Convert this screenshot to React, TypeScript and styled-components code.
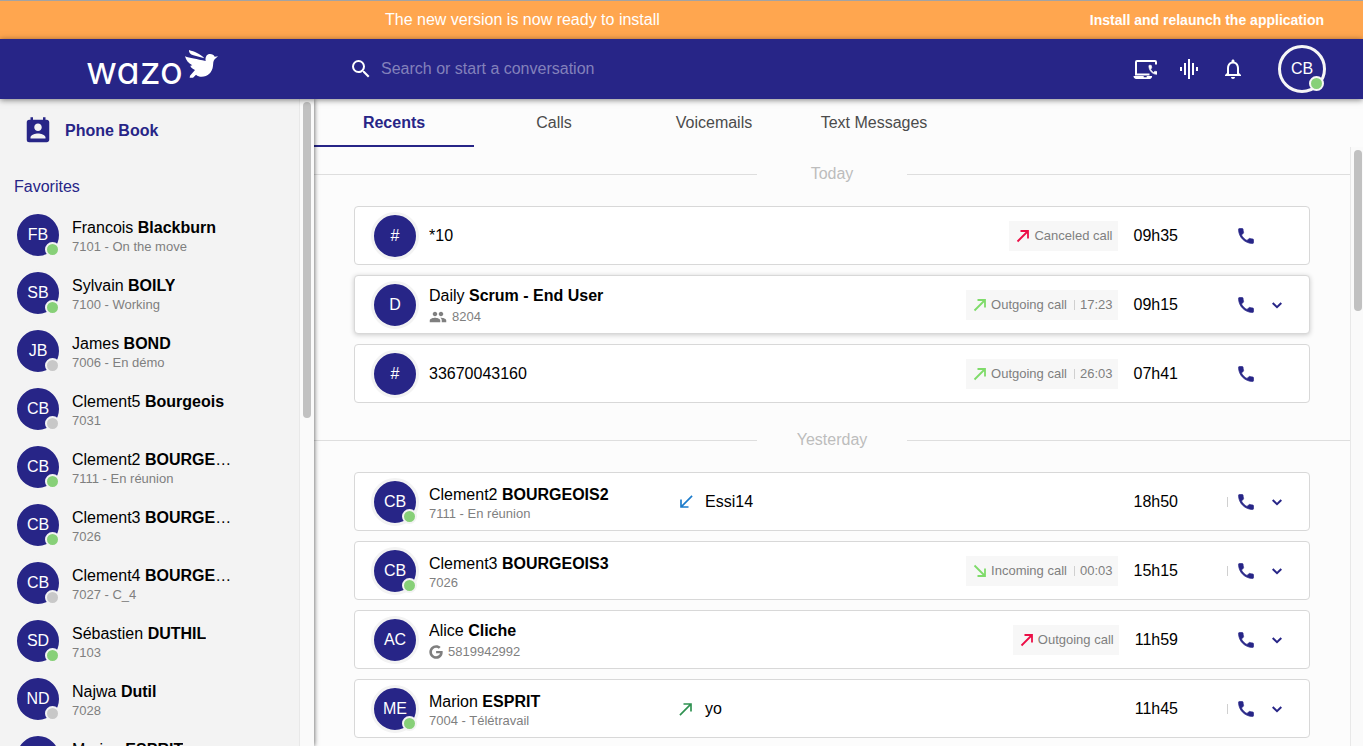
import React from "react";
import styled, { createGlobalStyle } from "styled-components";
import {
  MdCallMade,
  MdCallReceived,
  MdGraphicEq,
  MdGroup,
  MdNotificationsNone,
  MdPermContactCalendar,
  MdSearch,
} from "react-icons/md";
import { FaGoogle } from "react-icons/fa";

const color = {
  brand: "#272587",
  orange: "#ffa64f",
  surface: "#fcfcfc",
  side: "#f3f3f3",
  line: "#d8d8d8",
  muted: "#7f7f7f",
  online: "#87d078",
  offline: "#c8c8c8",
  green: "#7fdb6a",
  darkGreen: "#2e9150",
  red: "#ec0f47",
  blue: "#1b7bcb",
};

const GlobalStyle = createGlobalStyle`
  *, *::before, *::after { box-sizing: border-box; }
  body {
    margin: 0;
    background: ${color.surface};
    color: #000;
    font: 16px/20px "Liberation Sans", Helvetica, Arial, sans-serif;
  }
  button, input { font: inherit; color: inherit; border: 0; padding: 0; background: none; }
  button { cursor: pointer; }
  svg { display: block; flex: none; }
  ul { list-style: none; margin: 0; padding: 0; }
`;

const Shell = styled.div`
  display: flex;
  flex-direction: column;
  height: 100vh;
  overflow: hidden;
`;

const Banner = styled.div`
  display: flex;
  align-items: center;
  justify-content: space-between;
  flex: none;
  height: 39px;
  padding: 0 39px 0 385px;
  border-top: 1px solid #a3a3a3;
  background: ${color.orange};
  color: #fff;
`;

const InstallButton = styled.button`
  font-size: 14px;
  font-weight: 700;
`;

const Header = styled.header`
  display: flex;
  align-items: center;
  flex: none;
  position: relative;
  z-index: 2;
  height: 60px;
  padding-right: 37px;
  background: ${color.brand};
  color: #fff;
  box-shadow: 0 1px 6px rgba(0, 0, 0, 0.5);
`;

const Logo = styled.a`
  display: flex;
  align-items: flex-start;
  gap: 2px;
  flex: none;
  width: 349px;
  height: 38px;
  padding-left: 86px;
  color: #fff;
  text-decoration: none;
`;

const Wordmark = styled.span`
  font: 400 38px/40px Inter, "Liberation Sans", sans-serif;
  font-feature-settings: "cv11" 1;
`;

const SearchLabel = styled.label`
  display: flex;
  align-items: center;
  gap: 8px;
  flex: 1;
`;

const SearchInput = styled.input`
  flex: 1;
  min-width: 0;
  height: 40px;
  outline: 0;
  &::placeholder { color: #8381bb; opacity: 1; }
`;

const HeaderActions = styled.div`
  display: flex;
  gap: 20px;
  margin-right: 33px;
`;

const Body = styled.div`
  display: flex;
  flex: 1;
  min-height: 0;
`;

const Sidebar = styled.aside`
  display: flex;
  flex: none;
  position: relative;
  z-index: 1;
  width: 314px;
  background: ${color.side};
  box-shadow: 0 0 5px rgba(0, 0, 0, 0.7);
`;

const SideContent = styled.div`
  flex: 1;
  min-width: 0;
  overflow: hidden;
`;

const PhoneBook = styled.a`
  display: flex;
  align-items: center;
  gap: 12px;
  height: 64px;
  padding-left: 23px;
  color: ${color.brand};
  font-weight: 700;
  text-decoration: none;
`;

const SideTitle = styled.h2`
  margin: 14px 0 14px 14px;
  color: ${color.brand};
  font-size: 16px;
  line-height: 20px;
  font-weight: 400;
`;

const Contact = styled.li`
  display: flex;
  align-items: center;
  gap: 10px;
  height: 48px;
  margin: 0 65px 10px 14px;
`;

const Avatar = styled.span<{ $ring: string }>`
  display: flex;
  align-items: center;
  justify-content: center;
  flex: none;
  position: relative;
  width: 48px;
  height: 48px;
  border: 3px solid ${(p) => p.$ring};
  border-radius: 50%;
  background: ${color.brand};
  color: #fff;
`;

const StatusDot = styled.span<{ $online: boolean; $ring: string }>`
  position: absolute;
  right: -1px;
  bottom: -1px;
  width: 15px;
  height: 15px;
  border: 2px solid ${(p) => p.$ring};
  border-radius: 50%;
  background: ${(p) => (p.$online ? color.online : color.offline)};
`;

const Identity = styled.div<{ $nudged?: boolean }>`
  min-width: 0;
  padding-top: ${(p) => (p.$nudged ? "4px" : "0")};
`;

const CallIdentity = styled(Identity)`
  flex: 0 0 237px;
`;

const Name = styled.div`
  overflow: hidden;
  text-overflow: ellipsis;
  white-space: nowrap;
`;

const Detail = styled.div<{ $tall?: boolean }>`
  display: flex;
  align-items: center;
  gap: 5px;
  color: ${color.muted};
  font-size: 13px;
  line-height: ${(p) => (p.$tall ? "22px" : "18px")};
`;

const Track = styled.div<{ $width: number }>`
  flex: none;
  width: ${(p) => p.$width}px;
  padding: 3px 1px 0 3px;
  border-left: 1px solid #e8e8e8;
  background: #fafafa;
`;

const Thumb = styled.div<{ $share: number }>`
  width: 8px;
  height: ${(p) => p.$share}%;
  border-radius: 4px;
  background: #c1c1c1;
`;

const Main = styled.main`
  display: flex;
  flex-direction: column;
  flex: 1;
  min-width: 0;
`;

const Tabs = styled.nav`
  display: flex;
  flex: none;
`;

const Tab = styled.button<{ $active?: boolean }>`
  width: 160px;
  height: 48px;
  padding-top: 2px;
  border-bottom: 2px solid ${(p) => (p.$active ? color.brand : "transparent")};
  color: ${(p) => (p.$active ? color.brand : "#4b4b4b")};
  font-weight: ${(p) => (p.$active ? 700 : 400)};
`;

const Feed = styled.div`
  display: flex;
  flex: 1;
  min-height: 0;
`;

const FeedContent = styled.div`
  flex: 1;
  min-width: 0;
  overflow: hidden;
`;

const DayTitle = styled.h3`
  display: flex;
  align-items: center;
  height: 55px;
  margin: 0 0 4px;
  color: #bdbdbd;
  font-size: 16px;
  font-weight: 400;
  &::before, &::after {
    content: "";
    flex: 1;
    height: 1px;
    background: #dedede;
  }
`;

const DayName = styled.span`
  min-width: 150px;
  padding-bottom: 2px;
  text-align: center;
`;

const CallList = styled.ul`
  padding: 0 40px;
`;

const CallCard = styled.li<{ $raised?: boolean }>`
  display: flex;
  align-items: center;
  gap: 10px;
  height: 59px;
  margin-bottom: 10px;
  padding: 0 17px 0 16px;
  border: 1px solid ${color.line};
  border-radius: 4px;
  background: #fff;
  box-shadow: ${(p) => (p.$raised ? "0 1px 5px rgba(0, 0, 0, 0.2)" : "none")};
`;

const Note = styled.div`
  display: flex;
  align-items: center;
  gap: 9px;
  flex: 1;
  min-width: 0;
`;

const Tag = styled.div`
  display: flex;
  align-items: center;
  gap: 2px;
  height: 30px;
  padding: 0 5px;
  background: #f7f7f7;
  color: ${color.muted};
  font-size: 13px;
  white-space: nowrap;
`;

const Duration = styled.span`
  display: flex;
  align-items: center;
  gap: 5px;
  margin-left: 5px;
`;

const Separator = styled.span<{ $hidden?: boolean }>`
  width: 1px;
  height: 10px;
  background: ${(p) => (p.$hidden ? "transparent" : "#d0d0d0")};
`;

const Time = styled.time`
  padding-left: 6px;
`;

const Actions = styled.div`
  display: flex;
  align-items: center;
  gap: 3px;
  margin-left: 39px;
  color: ${color.brand};
`;

const IconButton = styled.button`
  display: flex;
  align-items: center;
  justify-content: center;
  width: 30px;
  height: 30px;
`;

const HeaderButton = styled(IconButton)`
  width: 24px;
  height: 24px;
`;

const ActionSlots = styled.div`
  display: grid;
  grid-template-columns: 30px 30px;
  gap: 1px;
`;

type Person = {
  initials: string;
  first: string;
  last?: string;
  detail?: string;
  online?: boolean;
};

type Call = Person & {
  kind?: "group" | "google";
  tag?: { label: string; tint: string; incoming?: boolean; duration?: string };
  note?: { text: string; tint: string; incoming?: boolean };
  time: string;
  divided?: boolean;
  expandable?: boolean;
  raised?: boolean;
};

const contacts: Person[] = [
  { initials: "FB", first: "Francois", last: "Blackburn", detail: "7101 - On the move", online: true },
  { initials: "SB", first: "Sylvain", last: "BOILY", detail: "7100 - Working", online: true },
  { initials: "JB", first: "James", last: "BOND", detail: "7006 - En démo", online: false },
  { initials: "CB", first: "Clement5", last: "Bourgeois", detail: "7031", online: false },
  { initials: "CB", first: "Clement2", last: "BOURGEOIS2", detail: "7111 - En réunion", online: true },
  { initials: "CB", first: "Clement3", last: "BOURGEOIS3", detail: "7026", online: true },
  { initials: "CB", first: "Clement4", last: "BOURGEOIS4", detail: "7027 - C_4", online: false },
  { initials: "SD", first: "Sébastien", last: "DUTHIL", detail: "7103", online: true },
  { initials: "ND", first: "Najwa", last: "Dutil", detail: "7028", online: false },
  { initials: "ME", first: "Marion", last: "ESPRIT", detail: "7004 - Télétravail", online: true },
];

const days: { title: string; calls: Call[] }[] = [
  {
    title: "Today",
    calls: [
      { initials: "#", first: "*10", time: "09h35", tag: { label: "Canceled call", tint: color.red } },
      {
        initials: "D", first: "Daily", last: "Scrum - End User", detail: "8204", kind: "group", time: "09h15",
        tag: { label: "Outgoing call", tint: color.green, duration: "17:23" },
        expandable: true, raised: true,
      },
      {
        initials: "#", first: "33670043160", time: "07h41",
        tag: { label: "Outgoing call", tint: color.green, duration: "26:03" },
      },
    ],
  },
  {
    title: "Yesterday",
    calls: [
      {
        initials: "CB", first: "Clement2", last: "BOURGEOIS2", detail: "7111 - En réunion", online: true,
        note: { text: "Essi14", tint: color.blue, incoming: true }, time: "18h50", divided: true, expandable: true,
      },
      {
        initials: "CB", first: "Clement3", last: "BOURGEOIS3", detail: "7026", online: true, time: "15h15",
        tag: { label: "Incoming call", tint: color.green, incoming: true, duration: "00:03" },
        divided: true, expandable: true,
      },
      {
        initials: "AC", first: "Alice", last: "Cliche", detail: "5819942992", kind: "google", time: "11h59",
        tag: { label: "Outgoing call", tint: color.red }, expandable: true,
      },
      {
        initials: "ME", first: "Marion", last: "ESPRIT", detail: "7004 - Télétravail", online: true,
        note: { text: "yo", tint: color.darkGreen }, time: "11h45", divided: true, expandable: true,
      },
    ],
  },
];

const handset =
  "M6.62 10.79c1.44 2.83 3.76 5.14 6.59 6.59l2.2-2.2c.27-.27.67-.36 1.02-.24 1.12.37 2.33.57 3.57.57.55 0 1 .45 1 1V20c0 .55-.45 1-1 1C10.61 21 3 13.39 3 4c0-.55.45-1 1-1h3.5c.55 0 1 .45 1 1 0 1.25.2 2.45.57 3.57.11.35.03.74-.25 1.02l-2.2 2.2z";

function TagArrow({ incoming, tint }: { incoming?: boolean; tint: string }) {
  return (
    <svg width="18" height="18" viewBox="0 0 18 18" fill="none" stroke={tint} strokeWidth="1.8" aria-hidden="true">
      <path d={incoming ? "M3.500 3.500L14 14M14 6.500V14H6.500" : "M3.500 14.500L14 4M6.500 4H14V11.500"} />
    </svg>
  );
}

function Bird() {
  return (
    <svg width="33" height="28" viewBox="0 0 99 84" fill="#fff" aria-hidden="true">
      <path d="M12 0C28 5 45 10 58 25L25 16C16 13 11 8 12 0Z" />
      <path d="M0 19C14 25 36 27 62 33C60 20 66 12 75 12C82 12 87 15 89 20L99 19L89 28C84 34 85 40 84 47C82 67 68 80 50 80C43 80 38 78 33 74L24 83L14 83L15 77L30 60C22 56 17 52 16 47L22 46C10 39 3 31 0 19Z" />
    </svg>
  );
}

function LaptopPhoneIcon() {
  return (
    <svg width="24" height="24" viewBox="0 0 24 24" fill="#fff" aria-hidden="true">
      <path d="M23 7.500V5a1 1 0 0 0-1-1H4a1 1 0 0 0-1 1v12.500h13.500" fill="none" stroke="#fff" strokeWidth="2" />
      <path d="M.5 19h10.200v1.200h3V19h5.400c0 1.600-1 3-2.400 3H3.200C1.700 22 .5 20.600.5 19Z" />
      <path
        d={handset}
        transform="translate(14.500 6.800) scale(.46 .5)"
        stroke="#fff"
        strokeWidth="1.400"
      />
    </svg>
  );
}

function PhoneIcon() {
  return (
    <svg width="20" height="20" viewBox="0 0 24 24" fill="currentColor" aria-hidden="true">
      <path d={handset} stroke="currentColor" strokeWidth="0.8" />
    </svg>
  );
}

function ChevronIcon() {
  return (
    <svg width="20" height="20" viewBox="0 0 20 20" fill="none" stroke="currentColor" strokeWidth="2" aria-hidden="true">
      <path d="M5.700 8L10 12.200L14.300 8" />
    </svg>
  );
}

function PersonAvatar({ person, ring }: { person: Person; ring: string }) {
  return (
    <Avatar $ring={ring}>
      {person.initials}
      {person.online !== undefined && <StatusDot $online={person.online} $ring={ring} />}
    </Avatar>
  );
}

function CallRow({ call }: { call: Call }) {
  const { tag, note, kind } = call;
  const NoteArrow = note?.incoming ? MdCallReceived : MdCallMade;
  return (
    <CallCard $raised={call.raised}>
      <PersonAvatar person={call} ring={color.side} />
      <CallIdentity $nudged={Boolean(call.detail)}>
        <Name>
          {call.first} <b>{call.last}</b>
        </Name>
        {call.detail && (
          <Detail $tall={Boolean(kind)}>
            {kind === "group" && <MdGroup size={18} />}
            {kind === "google" && <FaGoogle size={14} />}
            {call.detail}
          </Detail>
        )}
      </CallIdentity>
      <Note>
        {note && (
          <>
            <NoteArrow size={20} color={note.tint} />
            {note.text}
          </>
        )}
      </Note>
      {tag && (
        <Tag>
          <TagArrow incoming={tag.incoming} tint={tag.tint} />
          {tag.label}
          {tag.duration && (
            <Duration>
              <Separator />
              {tag.duration}
            </Duration>
          )}
        </Tag>
      )}
      <Time>{call.time}</Time>
      <Actions>
        <Separator $hidden={!call.divided} />
        <ActionSlots>
          <IconButton aria-label="Call">
            <PhoneIcon />
          </IconButton>
          {call.expandable && (
            <IconButton aria-label="Show more">
              <ChevronIcon />
            </IconButton>
          )}
        </ActionSlots>
      </Actions>
    </CallCard>
  );
}

export default function App() {
  return (
    <Shell>
      <GlobalStyle />
      <Banner>
        <span>The new version is now ready to install</span>
        <InstallButton>Install and relaunch the application</InstallButton>
      </Banner>
      <Header>
        <Logo href="#">
          <Wordmark>wazo</Wordmark>
          <Bird />
        </Logo>
        <SearchLabel>
          <MdSearch size={24} />
          <SearchInput aria-label="Search" placeholder="Search or start a conversation" />
        </SearchLabel>
        <HeaderActions>
          <HeaderButton aria-label="Devices">
            <LaptopPhoneIcon />
          </HeaderButton>
          <HeaderButton aria-label="Audio">
            <MdGraphicEq size={24} />
          </HeaderButton>
          <HeaderButton aria-label="Notifications">
            <MdNotificationsNone size={24} />
          </HeaderButton>
        </HeaderActions>
        <PersonAvatar person={{ initials: "CB", first: "", online: true }} ring="#f6f6f6" />
      </Header>
      <Body>
        <Sidebar>
          <SideContent>
            <PhoneBook href="#">
              <MdPermContactCalendar size={30} />
              Phone Book
            </PhoneBook>
            <SideTitle>Favorites</SideTitle>
            <ul>
              {contacts.map((person) => (
                <Contact key={person.first}>
                  <PersonAvatar person={person} ring={color.side} />
                  <Identity $nudged>
                    <Name>
                      {person.first} <b>{person.last}</b>
                    </Name>
                    <Detail>{person.detail}</Detail>
                  </Identity>
                </Contact>
              ))}
            </ul>
          </SideContent>
          <Track $width={15}>
            <Thumb $share={49} />
          </Track>
        </Sidebar>
        <Main>
          <Tabs>
            <Tab $active>Recents</Tab>
            <Tab>Calls</Tab>
            <Tab>Voicemails</Tab>
            <Tab>Text Messages</Tab>
          </Tabs>
          <Feed>
            <FeedContent>
              {days.map((day) => (
                <section key={day.title}>
                  <DayTitle>
                    <DayName>{day.title}</DayName>
                  </DayTitle>
                  <CallList>
                    {day.calls.map((call) => (
                      <CallRow key={call.time} call={call} />
                    ))}
                  </CallList>
                </section>
              ))}
            </FeedContent>
            <Track $width={13}>
              <Thumb $share={27} />
            </Track>
          </Feed>
        </Main>
      </Body>
    </Shell>
  );
}
